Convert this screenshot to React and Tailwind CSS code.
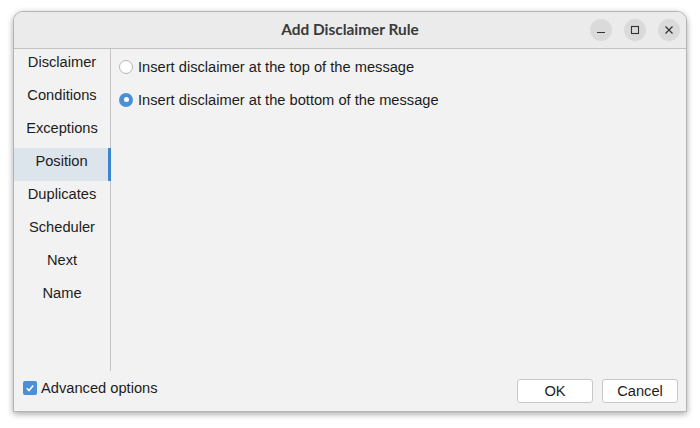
import React from "react";

const items = ["Disclaimer", "Conditions", "Exceptions", "Position", "Duplicates", "Scheduler", "Next", "Name"];

function TitleButton({ children }) {
  return (
    <div className="w-[22px] h-[22px] rounded-full bg-[#dadada] flex items-center justify-center">
      {children}
    </div>
  );
}

export default function App() {
  const font = { fontFamily: '"Liberation Sans", Arial, sans-serif' };
  return (
    <div className="w-[700px] h-[428px] bg-white pt-[11px] pl-[13px]" style={font}>
      <div className="w-[674px] h-[401px] flex flex-col border border-[#b4b4b4] rounded-t-[10px] bg-[#f2f2f2] shadow-[0_2px_6px_rgba(0,0,0,0.35)] overflow-hidden">
        {/* title bar */}
        <div className="h-[37px] shrink-0 bg-[#ebebeb] border-b border-[#c2c2c2] flex items-center relative">
          <div className="flex-1 text-center text-[15.4px] font-bold text-[#3a3a3a] pb-[1px]" style={{ fontFamily: 'Lato, "Noto Sans", sans-serif' }}>
            Add Disclaimer Rule
          </div>
          <div className="absolute right-[6px] top-[7px] flex gap-[12px]">
            <TitleButton>
              <svg width="10" height="10" viewBox="0 0 10 10"><path d="M1 7.5h8" stroke="#333" strokeWidth="1.2" /></svg>
            </TitleButton>
            <TitleButton>
              <svg width="10" height="10" viewBox="0 0 10 10"><rect x="1.5" y="1.5" width="7" height="7" fill="none" stroke="#333" strokeWidth="1.1" /></svg>
            </TitleButton>
            <TitleButton>
              <svg width="10" height="10" viewBox="0 0 10 10"><path d="M1.5 1.5l7 7M8.5 1.5l-7 7" stroke="#333" strokeWidth="1.2" /></svg>
            </TitleButton>
          </div>
        </div>
        {/* body */}
        <div className="flex-1 flex min-h-0">
          <div className="w-[97px] shrink-0 border-r border-[#c4c4c4] flex flex-col">
            {items.map((it) => (
              <div
                key={it}
                className={
                  it === "Position"
                    ? "h-[33px] pt-[4px] leading-[18px] text-center text-[14.67px] text-[#1c1c1c] bg-[#dce4ec] border-r-[3px] border-[#3d86cf] -mr-[1px] pl-[1px]"
                    : "h-[33px] pt-[4px] leading-[18px] text-center text-[14.67px] text-[#1c1c1c]"
                }
              >
                {it}
              </div>
            ))}
          </div>
          <div className="flex-1 pl-[8px] pt-[1px] flex flex-col">
            <div className="h-[33px] flex items-center gap-[5px]">
              <span className="w-[14px] h-[14px] rounded-full bg-white border border-[#b5b5b5]"></span>
              <span className="text-[14.67px] text-[#1c1c1c]">Insert disclaimer at the top of the message</span>
            </div>
            <div className="h-[33px] flex items-center gap-[5px]">
              <span className="w-[14px] h-[14px] rounded-full bg-[#4a90d9] flex items-center justify-center">
                <span className="w-[5px] h-[5px] rounded-full bg-white"></span>
              </span>
              <span className="text-[14.67px] text-[#1c1c1c]">Insert disclaimer at the bottom of the message</span>
            </div>
          </div>
        </div>
        {/* bottom bar */}
        <div className="h-[40px] shrink-0 flex items-center justify-between pl-[9px] pr-[8px]">
          <div className="flex items-center gap-[4px] -mt-[6px]">
            <span className="w-[14px] h-[14px] rounded-[2px] bg-[#4a90d9] flex items-center justify-center">
              <svg width="10" height="10" viewBox="0 0 10 10"><path d="M1.8 5.2l2.2 2.3 4.2-5" fill="none" stroke="white" strokeWidth="1.6" /></svg>
            </span>
            <span className="text-[14.67px] text-[#1c1c1c]">Advanced options</span>
          </div>
          <div className="flex gap-[9px]">
            <button className="w-[76px] h-[24px] bg-white border border-[#c8c8c8] rounded-[3px] text-[14.67px] text-[#1c1c1c] leading-none">OK</button>
            <button className="w-[76px] h-[24px] bg-white border border-[#c8c8c8] rounded-[3px] text-[14.67px] text-[#1c1c1c] leading-none">Cancel</button>
          </div>
        </div>
      </div>
    </div>
  );
}
